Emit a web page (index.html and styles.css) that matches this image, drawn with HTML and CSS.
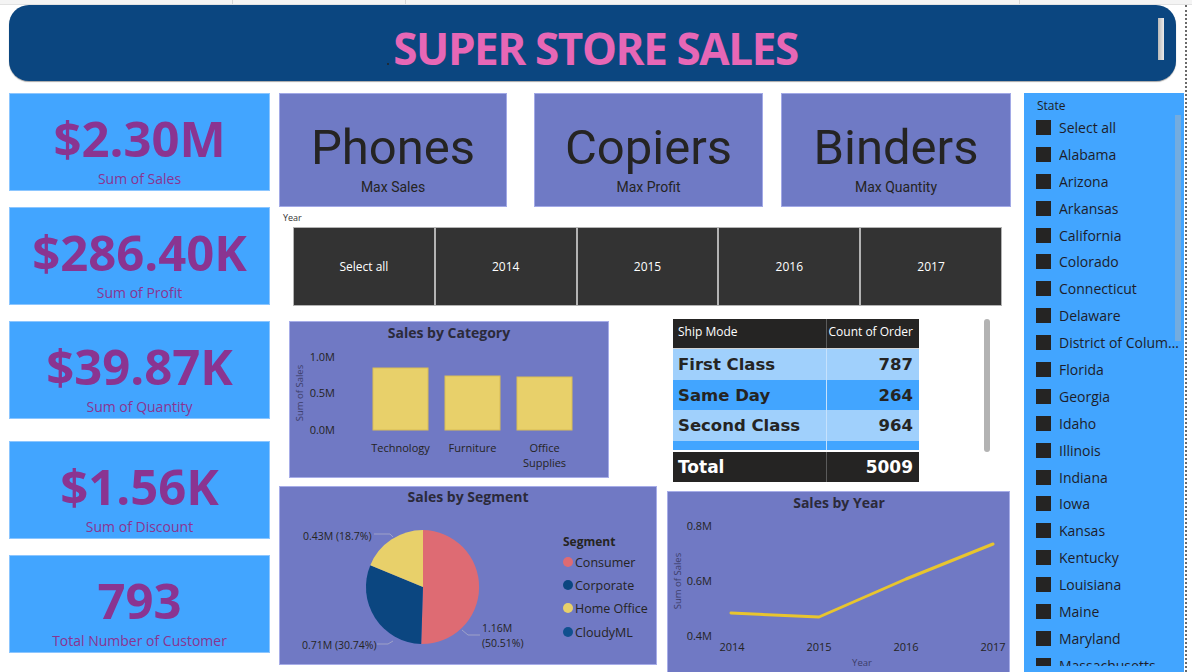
FILE: index.html
```html
<!DOCTYPE html>
<html lang="en">
<head>
<meta charset="utf-8">
<title>Super Store Sales</title>
<link rel="stylesheet" href="styles.css">
</head>
<body>
<div class="topbar"><span class="tb-cell tb-a"></span><span class="tb-cell tb-b"></span><span class="tb-cell tb-c"></span></div>
<div class="page">
  <header class="banner">
    <h1 class="banner-title"><span class="banner-dot"></span>SUPER STORE SALES</h1>
    <span class="banner-grip"></span>
  </header>

  <div class="canvas">
    <div class="kpis">
      <div class="kpi"><div class="kpi-value">$2.30M</div><div class="kpi-label">Sum of Sales</div></div>
      <div class="kpi"><div class="kpi-value">$286.40K</div><div class="kpi-label">Sum of Profit</div></div>
      <div class="kpi"><div class="kpi-value">$39.87K</div><div class="kpi-label">Sum of Quantity</div></div>
      <div class="kpi kpi-gap"><div class="kpi-value">$1.56K</div><div class="kpi-label">Sum of Discount</div></div>
      <div class="kpi"><div class="kpi-value">793</div><div class="kpi-label">Total Number of Customer</div></div>
    </div>

    <div class="middle">
      <div class="products">
        <div class="product"><div class="product-value">Phones</div><div class="product-label">Max Sales</div></div>
        <div class="product product-b"><div class="product-value">Copiers</div><div class="product-label">Max Profit</div></div>
        <div class="product product-c"><div class="product-value">Binders</div><div class="product-label">Max Quantity</div></div>
      </div>

      <div class="year-slicer">
        <div class="year-label">Year</div>
        <div class="year-tiles">
          <div class="year-tile">Select all</div>
          <div class="year-tile">2014</div>
          <div class="year-tile">2015</div>
          <div class="year-tile">2016</div>
          <div class="year-tile">2017</div>
        </div>
      </div>

      <div class="lower">
        <div class="lower-left">
          <div class="visual category">
            <svg class="chart" width="318" height="155" viewBox="0 0 318 155">
              <text class="ttl" x="159" y="16" text-anchor="middle">Sales by Category</text>
              <text class="axis-title" transform="translate(13,71) rotate(-90)" text-anchor="middle">Sum of Sales</text>
              <text class="tick" x="45" y="39" text-anchor="end">1.0M</text>
              <text class="tick" x="45" y="75" text-anchor="end">0.5M</text>
              <text class="tick" x="45" y="112" text-anchor="end">0.0M</text>
              <rect class="bar" x="83" y="46" width="55" height="62"/>
              <rect class="bar" x="155" y="54" width="55" height="54"/>
              <rect class="bar" x="227" y="55" width="55" height="53"/>
              <text class="tick" x="110.5" y="130" text-anchor="middle">Technology</text>
              <text class="tick" x="182.5" y="130" text-anchor="middle">Furniture</text>
              <text class="tick" x="254.5" y="130" text-anchor="middle">Office</text>
              <text class="tick" x="254.5" y="145" text-anchor="middle">Supplies</text>
            </svg>
          </div>

          <div class="visual segment">
            <svg class="chart" width="376" height="177" viewBox="0 0 376 177">
              <text class="ttl" x="188" y="15" text-anchor="middle">Sales by Segment</text>
              <path d="M143,100 L143,43 A57,57 0 1,1 141.2,157 Z" fill="#de6b73"/>
              <path d="M143,100 L141.2,157 A57,57 0 0,1 90.3,78.2 Z" fill="#0b4680"/>
              <path d="M143,100 L90.3,78.2 A57,57 0 0,1 143,43 Z" fill="#e8d06a"/>
              <polyline class="leader" points="94,47 110,47 113,50"/>
              <polyline class="leader" points="97,157 108,157 113,154"/>
              <polyline class="leader" points="182,143 188,148 200,148"/>
              <text class="dlabel" x="23" y="53">0.43M (18.7%)</text>
              <text class="dlabel" x="22" y="162">0.71M (30.74%)</text>
              <text class="dlabel" x="202" y="145">1.16M</text>
              <text class="dlabel" x="202" y="160">(50.51%)</text>
              <text class="legend-title" x="283" y="59">Segment</text>
              <circle cx="288" cy="75" r="5" fill="#de6b73"/>
              <text class="legend" x="295" y="79.5">Consumer</text>
              <circle cx="288" cy="98" r="5" fill="#0b4680"/>
              <text class="legend" x="295" y="102.5">Corporate</text>
              <circle cx="288" cy="121" r="5" fill="#e8d06a"/>
              <text class="legend" x="295" y="125.5">Home Office</text>
              <circle cx="288" cy="145" r="5" fill="#10508e"/>
              <text class="legend" x="295" y="149.5">CloudyML</text>
            </svg>
          </div>
        </div>

        <div class="lower-right">
          <div class="ship">
            <div class="ship-grid">
              <div class="ship-row ship-head">
                <div class="ship-cell">Ship Mode</div>
                <div class="ship-cell ship-num">Count of Order</div>
              </div>
              <div class="ship-row ship-light">
                <div class="ship-cell">First Class</div>
                <div class="ship-cell ship-num">787</div>
              </div>
              <div class="ship-row ship-dark">
                <div class="ship-cell">Same Day</div>
                <div class="ship-cell ship-num">264</div>
              </div>
              <div class="ship-row ship-light">
                <div class="ship-cell">Second Class</div>
                <div class="ship-cell ship-num">964</div>
              </div>
              <div class="ship-row ship-dark ship-partial">
                <div class="ship-cell"></div>
                <div class="ship-cell ship-num"></div>
              </div>
              <div class="ship-row ship-total">
                <div class="ship-cell">Total</div>
                <div class="ship-cell ship-num">5009</div>
              </div>
            </div>
            <div class="ship-scroll"></div>
          </div>

          <div class="visual year-chart">
            <svg class="chart" width="341" height="183" viewBox="0 0 341 183">
              <text class="ttl" x="171" y="16" text-anchor="middle">Sales by Year</text>
              <text class="axis-title" transform="translate(13,89) rotate(-90)" text-anchor="middle">Sum of Sales</text>
              <text class="tick" x="44" y="38" text-anchor="end">0.8M</text>
              <text class="tick" x="44" y="93" text-anchor="end">0.6M</text>
              <text class="tick" x="44" y="148" text-anchor="end">0.4M</text>
              <polyline class="line" points="63,121 151,125 238,87 325,52"/>
              <text class="tick" x="64" y="159" text-anchor="middle">2014</text>
              <text class="tick" x="151" y="159" text-anchor="middle">2015</text>
              <text class="tick" x="238" y="159" text-anchor="middle">2016</text>
              <text class="tick" x="325" y="159" text-anchor="middle">2017</text>
              <text class="axis-title" x="194" y="174" text-anchor="middle">Year</text>
            </svg>
          </div>
        </div>
      </div>
    </div>

    <aside class="state">
      <div class="state-title">State</div>
      <div class="state-list">
        <div class="state-item"><span class="state-box"></span><span class="state-name">Select all</span></div>
        <div class="state-item"><span class="state-box"></span><span class="state-name">Alabama</span></div>
        <div class="state-item"><span class="state-box"></span><span class="state-name">Arizona</span></div>
        <div class="state-item"><span class="state-box"></span><span class="state-name">Arkansas</span></div>
        <div class="state-item"><span class="state-box"></span><span class="state-name">California</span></div>
        <div class="state-item"><span class="state-box"></span><span class="state-name">Colorado</span></div>
        <div class="state-item"><span class="state-box"></span><span class="state-name">Connecticut</span></div>
        <div class="state-item"><span class="state-box"></span><span class="state-name">Delaware</span></div>
        <div class="state-item"><span class="state-box"></span><span class="state-name">District of Columbia</span></div>
        <div class="state-item"><span class="state-box"></span><span class="state-name">Florida</span></div>
        <div class="state-item"><span class="state-box"></span><span class="state-name">Georgia</span></div>
        <div class="state-item"><span class="state-box"></span><span class="state-name">Idaho</span></div>
        <div class="state-item"><span class="state-box"></span><span class="state-name">Illinois</span></div>
        <div class="state-item"><span class="state-box"></span><span class="state-name">Indiana</span></div>
        <div class="state-item"><span class="state-box"></span><span class="state-name">Iowa</span></div>
        <div class="state-item"><span class="state-box"></span><span class="state-name">Kansas</span></div>
        <div class="state-item"><span class="state-box"></span><span class="state-name">Kentucky</span></div>
        <div class="state-item"><span class="state-box"></span><span class="state-name">Louisiana</span></div>
        <div class="state-item"><span class="state-box"></span><span class="state-name">Maine</span></div>
        <div class="state-item"><span class="state-box"></span><span class="state-name">Maryland</span></div>
        <div class="state-item"><span class="state-box"></span><span class="state-name">Massachusetts</span></div>
      </div>
      <span class="state-scroll"></span>
    </aside>
  </div>
</div>
</body>
</html>
```

FILE: styles.css
```css
html, body {
  margin: 0;
}

body {
  width: 1192px;
  height: 672px;
  overflow: hidden;
  background: #ffffff;
  font-family: "Open Sans", "Noto Sans", sans-serif;
  color: #252423;
}

/* browser-like strip at the very top */
.topbar {
  display: flex;
  height: 4px;
  background: #f4f4f4;
  border-bottom: 1px solid #e2e2e2;
}
.tb-cell { border-right: 1px solid #d6d6d6; }
.tb-a { width: 232px; }
.tb-b { width: 172px; }
.tb-c { width: 613px; }

.page {
  width: 1185px;
  height: 667px;
  border-right: 2px dotted #6a6a6a;
}

/* banner */
.banner {
  position: relative;
  margin-left: 9px;
  width: 1167px;
  height: 76px;
  box-sizing: border-box;
  padding-top: 10px;
  border-radius: 20px;
  background: #0b4680;
  box-shadow: 0 1px 1px rgba(0, 0, 0, 0.35);
  display: flex;
  justify-content: center;
  align-items: center;
}
.banner-title {
  margin: 0;
  font-size: 44px;
  line-height: 1;
  font-weight: 700;
  letter-spacing: -1.4px;
  color: #e767b6;
}
.banner-dot {
  display: inline-block;
  width: 2px;
  height: 2px;
  margin-right: 4px;
  background: #1c2b3a;
}
.banner-grip {
  position: absolute;
  left: 1149px;
  top: 13px;
  width: 6px;
  height: 42px;
  background: linear-gradient(90deg, #b9b9b9, #ececec);
}

/* main canvas */
.canvas {
  display: flex;
  align-items: flex-start;
  margin-top: 12px;
}

/* KPI cards */
.kpis {
  margin-left: 9px;
  width: 261px;
  display: flex;
  flex-direction: column;
  gap: 16px;
}
.kpi {
  height: 98px;
  box-sizing: border-box;
  padding-top: 19px;
  background: #42a5ff;
  border: 1px solid #8cc6ff;
  text-align: center;
  color: #8a3491;
}
.kpi-gap { margin-top: 6px; }
.kpi-value {
  font-size: 49px;
  line-height: 50px;
  font-weight: 700;
}
.kpi-label {
  margin-top: 7px;
  font-size: 14px;
  line-height: 18px;
}

/* middle column */
.middle {
  margin-left: 9px;
  width: 732px;
}
.products {
  display: flex;
  height: 114px;
}
.product {
  width: 228px;
  box-sizing: border-box;
  padding-top: 26px;
  background: #6f7ac5;
  border: 1px solid #a2a9e6;
  text-align: center;
  font-family: Roboto, "Open Sans", sans-serif;
  color: #252423;
}
.product-b { width: 229px; margin-left: 27px; }
.product-c { width: 230px; margin-left: 18px; }
.product-value {
  font-size: 49px;
  line-height: 56px;
}
.product-label {
  margin-top: 3px;
  font-size: 14px;
  line-height: 16px;
}

/* year slicer */
.year-slicer { height: 99px; }
.year-label {
  padding: 5px 0 0 4px;
  font-size: 9px;
  line-height: 12px;
  color: #333333;
}
.year-tiles {
  display: grid;
  grid-template-columns: repeat(5, 1fr);
  margin: 3px 0 0 14px;
  width: 709px;
  height: 79px;
}
.year-tile {
  display: flex;
  align-items: center;
  justify-content: center;
  background: #333333;
  border: 1px solid #b3b3b3;
  color: #ffffff;
  font-size: 12px;
}

/* lower area */
.lower {
  display: flex;
  align-items: flex-start;
}
.lower-left { width: 378px; }
.lower-right { margin-left: 10px; width: 344px; }

.visual {
  box-sizing: border-box;
  background: #7079c4;
  border: 1px solid #a7ade8;
}
.category {
  margin: 15px 0 0 10px;
  width: 320px;
  height: 157px;
}
.segment {
  margin-top: 8px;
  width: 378px;
  height: 179px;
}
.year-chart {
  margin-top: 9px;
  width: 343px;
  height: 185px;
}
.chart { display: block; }
.chart text {
  font-family: "Open Sans", sans-serif;
  fill: #252423;
}
.chart .ttl { font-size: 14px; font-weight: 700; fill: #2b2a3a; }
.chart .tick { font-size: 11px; }
.chart .axis-title { font-size: 9.5px; fill: #3c3d68; }
.chart .dlabel { font-size: 10.5px; }
.chart .legend-title { font-size: 12px; font-weight: 700; }
.chart .legend { font-size: 12.5px; }
.chart .bar { fill: #e8d06a; stroke: #d9bd55; stroke-width: 1; }
.chart .leader { fill: none; stroke: #9ea2c8; stroke-width: 1; }
.chart .line {
  fill: none;
  stroke: #e8c52e;
  stroke-width: 3;
  stroke-linecap: round;
  stroke-linejoin: round;
}

/* ship mode table */
.ship {
  display: flex;
  align-items: flex-start;
  margin: 13px 0 0 6px;
}
.ship-grid { width: 246px; }
.ship-row {
  display: grid;
  grid-template-columns: 153px 93px;
}
.ship-cell {
  display: flex;
  align-items: center;
  padding: 0 5px;
  font-family: "DejaVu Sans", sans-serif;
  font-weight: 700;
  font-size: 16.5px;
  white-space: nowrap;
}
.ship-num {
  justify-content: flex-end;
  padding-right: 6px;
  border-left: 1px solid #c6e2fd;
}
.ship-head {
  height: 29px;
  background: #252423;
  border-bottom: 1px solid #d4d4d4;
}
.ship-head .ship-cell {
  padding-bottom: 4px;
  font-family: "Open Sans", sans-serif;
  font-weight: 400;
  font-size: 12px;
  color: #ffffff;
}
.ship-head .ship-num { border-left-color: #5b5b5b; }
.ship-light { height: 30.7px; background: #a0d0fc; color: #252423; }
.ship-dark { height: 30.7px; background: #42a5ff; color: #252423; }
.ship-partial { height: 9px; }
.ship-total {
  height: 30px;
  border-top: 2px solid #ffffff;
  background: #252423;
}
.ship-total .ship-cell {
  color: #ffffff;
  font-size: 17px;
}
.ship-total .ship-num { border-left-color: #5b5b5b; }
.ship-scroll {
  margin-left: 65px;
  width: 6px;
  height: 133px;
  border-radius: 3px;
  background: #b3b3b3;
}

/* state slicer */
.state {
  position: relative;
  margin-left: 13px;
  width: 160px;
  height: 579px;
  box-sizing: border-box;
  padding: 5px 0 0 12px;
  background: #42a5ff;
}
.state-title {
  margin-left: 1px;
  font-size: 12px;
  line-height: 16px;
  color: #1e1e1e;
}
.state-list {
  height: 552px;
  overflow: hidden;
}
.state-item {
  display: flex;
  align-items: center;
  gap: 8px;
  height: 26.9px;
  padding-right: 3px;
  font-size: 14px;
  color: #1d1d2b;
  white-space: nowrap;
}
.state-box {
  flex: none;
  width: 15px;
  height: 15px;
  background: #252423;
}
.state-name {
  overflow: hidden;
  text-overflow: ellipsis;
}
.state-scroll {
  position: absolute;
  left: 151px;
  top: 22px;
  width: 6px;
  height: 226px;
  background: #74acdf;
}
```
